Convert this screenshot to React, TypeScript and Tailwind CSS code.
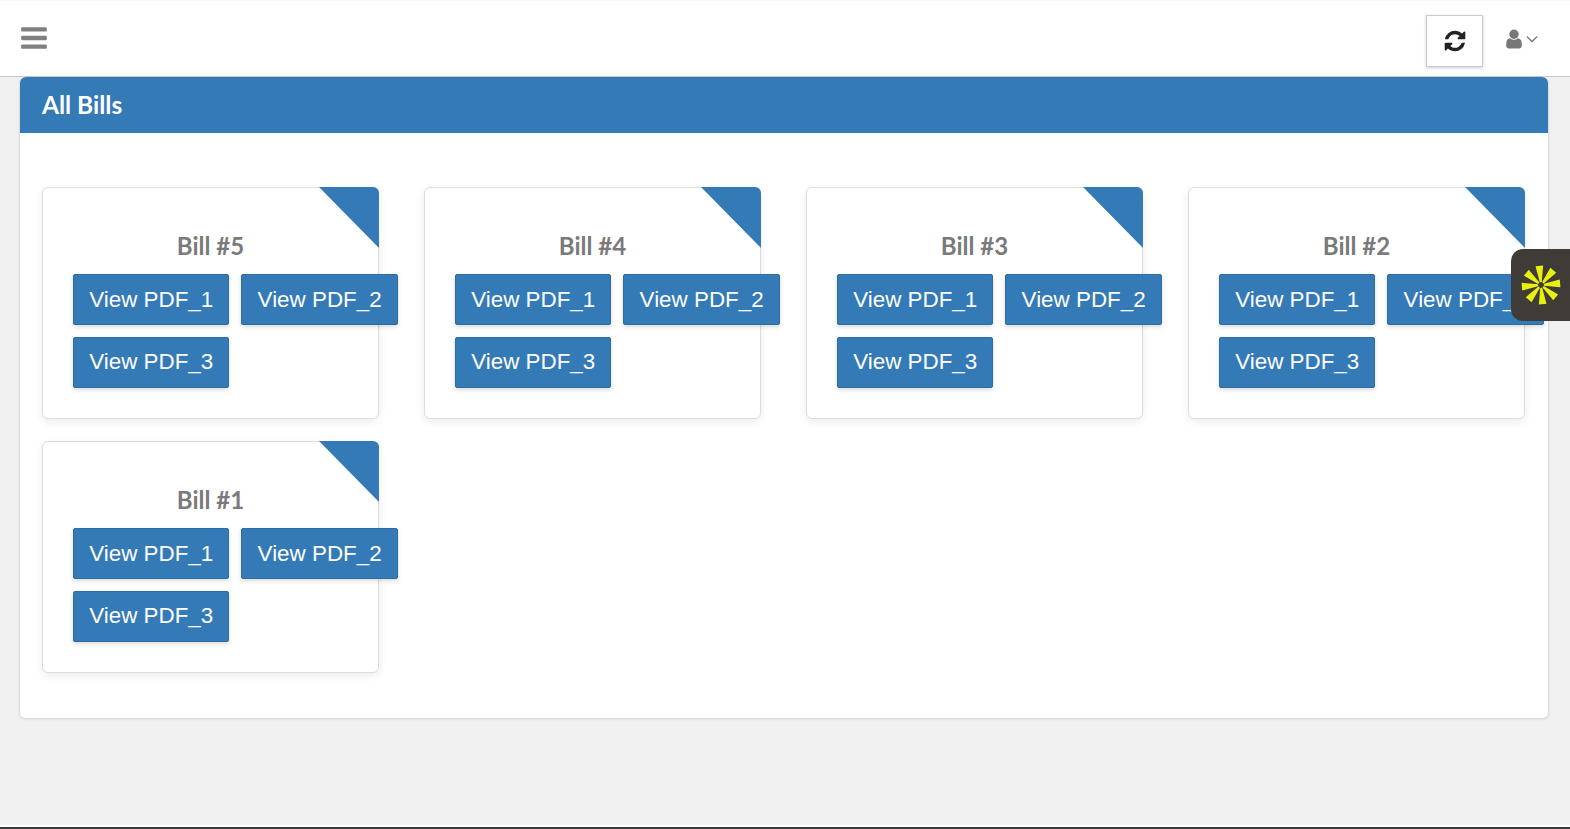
const bills = [5, 4, 3, 2, 1];
const pdfs = ["View PDF_1", "View PDF_2", "View PDF_3"];

function BillCard({ num }: { num: number }) {
  return (
    <div className="relative h-[232px] w-[337px] rounded-md border border-[#dddddd] bg-white pt-[43px] pl-[30px] shadow-[0_3px_8px_rgba(0,0,0,0.08)]">
      <div className="absolute -top-px -right-px h-[61px] w-[60px] rounded-tr-md bg-[#337ab7] [clip-path:polygon(0_0,100%_0,100%_100%)]" />
      <h3 className="mb-[13px] h-[30px] pr-[30px] text-center font-['Lato',sans-serif] text-[24px] leading-[30px] font-bold text-[#7a7a7a]">
        Bill #{num}
      </h3>
      <div className="flex w-[340px] flex-wrap gap-x-3 gap-y-[11.5px]">
        {pdfs.map((label) => (
          <button
            key={label}
            className="relative h-[51px] rounded-[2px] border border-[#2e6da4] bg-[#337ab7] px-[15.2px] font-['Liberation_Sans',sans-serif] text-[22.4px] whitespace-nowrap text-white shadow-[0_2px_4px_rgba(0,0,0,0.15)]"
          >
            {label}
          </button>
        ))}
      </div>
    </div>
  );
}

export default function App() {
  return (
    <div className="relative flex h-[829px] flex-col overflow-hidden bg-[#f0f0f0]">
      {/* Top bar */}
      <header className="flex h-[77px] shrink-0 items-center justify-between border-t border-b border-t-[#fdf6f3] border-b-[#c8c8c8] bg-white pr-[32px] pl-[19px]">
        <svg viewBox="0 0 1792 1792" className="-mt-[2px] h-[30px] w-[30px] fill-[#808080]">
          <path d="M1664 1344v128q0 26-19 45t-45 19h-1408q-26 0-45-19t-19-45v-128q0-26 19-45t45-19h1408q26 0 45 19t19 45zm0-512v128q0 26-19 45t-45 19h-1408q-26 0-45-19t-19-45v-128q0-26 19-45t45-19h1408q26 0 45 19t19 45zm0-512v128q0 26-19 45t-45 19h-1408q-26 0-45-19t-19-45v-128q0-26 19-45t45-19h1408q26 0 45 19t19 45z" />
        </svg>
        <div className="flex items-center gap-[20px]">
          <button className="mt-[5px] flex h-[52px] w-[57px] items-center justify-center border border-[#cccccc] bg-white shadow-[0_1px_3px_rgba(0,0,0,0.2)]">
            <svg viewBox="0 0 1792 1792" className="h-[24px] w-[24px] fill-[#222222]">
              <path d="M1639 1056q0 5-1 7-64 268-268 434.5t-478 166.5q-146 0-282.5-55t-243.5-157l-129 129q-19 19-45 19t-45-19-19-45v-448q0-26 19-45t45-19h448q26 0 45 19t19 45-19 45l-137 137q71 66 161 102t187 36q134 0 250-65t186-179q11-17 53-117 8-23 30-23h192q13 0 22.5 9.5t9.5 22.5zm25-800v448q0 26-19 45t-45 19h-448q-26 0-45-19t-19-45 19-45l138-138q-148-137-349-137-134 0-250 65t-186 179q-11 17-53 117-8 23-30 23h-199q-13 0-22.5-9.5t-9.5-22.5v-7q65-268 270-434.5t480-166.5q146 0 284 55.5t245 156.5l130-129q19-19 45-19t45 19 19 45z" />
            </svg>
          </button>
          <div className="flex items-center gap-[1px]">
            <svg viewBox="0 0 1792 1792" className="h-[22px] w-[22px] fill-[#777777]">
              <path d="M1536 1399q0 109-62.5 187t-150.5 78h-854q-88 0-150.5-78t-62.5-187q0-85 8.5-160.5t31.5-152 58.5-131 94-89 134.5-34.5q131 128 313 128t313-128q76 0 134.5 34.5t94 89 58.5 131 31.5 152 8.5 160.5zm-256-887q0 159-112.5 271.5t-271.5 112.5-271.5-112.5-112.5-271.5 112.5-271.5 271.5-112.5 271.5 112.5 112.5 271.5z" />
            </svg>
            <svg viewBox="0 0 14 14" className="h-[12px] w-[12px] fill-none stroke-[#777777] stroke-[1.5]">
              <path d="M1 4l6 6 6-6" />
            </svg>
          </div>
        </div>
      </header>

      {/* Panel */}
      <main className="ml-[19px] w-[1530px] rounded-md border border-t-0 border-[#dddddd] bg-white shadow-[0_1px_2px_rgba(0,0,0,0.06)]">
        <div className="flex h-[56px] items-center rounded-t-md bg-[#337ab7] px-[22px] font-['Lato',sans-serif] text-[24.5px] font-bold text-white">
          All Bills
        </div>
        <div className="flex h-[585px] flex-wrap content-start gap-x-[45px] gap-y-[22px] pt-[54px] pl-[22px]">
          {bills.map((n) => (
            <BillCard key={n} num={n} />
          ))}
        </div>
      </main>

      {/* Bottom edge */}
      <div className="absolute right-0 bottom-0 left-0 h-[4px] border-t-2 border-white bg-[#3a3a3a]" />

      {/* Floating widget */}
      <div className="absolute top-[249px] right-0 flex h-[72px] w-[59px] items-center justify-center rounded-l-xl bg-[#3f3b36]">
        <svg viewBox="-24 -24 48 48" className="h-[46px] w-[46px] fill-[#e9f00f]">
          {[-5, 40, 85, 130, 175, 220, 265, 310].map((a) => (
            <polygon key={a} points="-4,-20 4,-20 1,-3 -1,-3" transform={`rotate(${a})`} />
          ))}
        </svg>
      </div>
    </div>
  );
}
